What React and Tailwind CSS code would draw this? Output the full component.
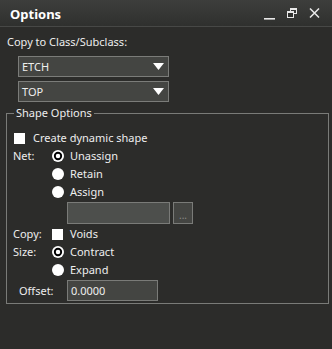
import React from "react";

const Radio = ({ checked }) => (
  <svg width="12" height="12" viewBox="0 0 12 12" className="shrink-0">
    <circle cx="6" cy="6" r="6" fill="#ffffff" />
    {checked && <circle cx="6" cy="6" r="3.2" fill="#ffffff" stroke="#000000" strokeWidth="1.9" />}
  </svg>
);

const Check = () => <div className="w-[11px] h-[11px] bg-white shrink-0" />;

const Arrow = () => (
  <svg width="11" height="7" viewBox="0 0 11 7">
    <polygon points="0,0 11,0 5.5,7" fill="#ffffff" />
  </svg>
);

const Select = ({ value }) => (
  <div className="w-[151px] h-[21px] ml-[18px] flex items-center justify-between bg-[#444542] border border-[#7b7c79] pl-[3px] pr-[4px]">
    <span>{value}</span>
    <Arrow />
  </div>
);

const RadioRow = ({ label, text, checked }) => (
  <div className="h-[18px] flex items-center">
    <span className="w-[45px] pl-[6px]">{label}</span>
    <Radio checked={checked} />
    <span className="ml-[6px]">{text}</span>
  </div>
);

export default function App() {
  return (
    <div
      className="w-[332px] h-[349px] bg-[#2c2c2a] text-[#eeeeee] text-[11px] leading-[16px] overflow-hidden"
      style={{ fontFamily: '"Noto Sans", "Open Sans", sans-serif' }}
    >
      {/* Title bar */}
      <div className="h-[27px] flex items-center justify-between bg-gradient-to-b from-[#3d3e3c] to-[#2f302e] border-b border-[#474846] pl-[10px] pr-[12px]">
        <span className="text-[13px] font-bold text-white pt-[2px]">Options</span>
        <div className="flex items-center gap-[12px] text-[#e8e8e8]">
          <svg width="11" height="14" viewBox="0 0 11 14">
            <rect x="0" y="12" width="11" height="1.6" fill="#e8e8e8" />
          </svg>
          <svg width="10" height="10" viewBox="0 0 10 10">
            <rect x="3.5" y="0.5" width="6" height="5" fill="none" stroke="#e8e8e8" strokeWidth="1" />
            <rect x="3.5" y="0.5" width="6" height="1.5" fill="#e8e8e8" />
            <rect x="0.5" y="3.5" width="6" height="6" fill="#2f302e" stroke="#e8e8e8" strokeWidth="1" />
            <rect x="0.5" y="3.5" width="6" height="1.5" fill="#e8e8e8" />
          </svg>
          <svg width="11" height="10" viewBox="0 0 11 10">
            <path d="M1 0.5 L10 9.5 M10 0.5 L1 9.5" stroke="#e8e8e8" strokeWidth="1.5" />
          </svg>
        </div>
      </div>

      {/* Body */}
      <div className="pt-[7px] flex flex-col">
        <div className="pl-[7px] h-[16px]">Copy to Class/Subclass:</div>
        <div className="mt-[6px] flex flex-col gap-[4px]">
          <Select value="ETCH" />
          <Select value="TOP" />
        </div>

        <fieldset className="mt-[3px] ml-[6px] mr-[3px] border border-[#7a7b78] pb-[2px]">
          <legend className="ml-[7px] px-[2px]">Shape Options</legend>
          <div className="mt-[8px] h-[18px] flex items-center pl-[7px]">
            <Check />
            <span className="ml-[8px]">Create dynamic shape</span>
          </div>
          <RadioRow label="Net:" text="Unassign" checked />
          <RadioRow text="Retain" />
          <RadioRow text="Assign" />
          <div className="mt-[1px] flex items-center gap-[3px] pl-[60px]">
            <div className="w-[103px] h-[22px] bg-[#4d4f4c] border border-[#7a7b78]" />
            <div className="w-[20px] h-[22px] bg-[#444542] border border-[#7a7b78] flex items-center justify-center text-[#8a8b88] text-[10px] leading-none pt-[4px]">
              ...
            </div>
          </div>
          <div className="mt-[1px] h-[18px] flex items-center">
            <span className="w-[45px] pl-[6px]">Copy:</span>
            <Check />
            <span className="ml-[7px]">Voids</span>
          </div>
          <RadioRow label="Size:" text="Contract" checked />
          <RadioRow text="Expand" />
          <div className="mt-[1px] flex items-center">
            <span className="w-[60px] pl-[12px]">Offset:</span>
            <div className="w-[91px] h-[21px] bg-[#444542] border border-[#7a7b78] flex items-center pl-[3px]">
              0.0000
            </div>
          </div>
        </fieldset>
      </div>
    </div>
  );
}
